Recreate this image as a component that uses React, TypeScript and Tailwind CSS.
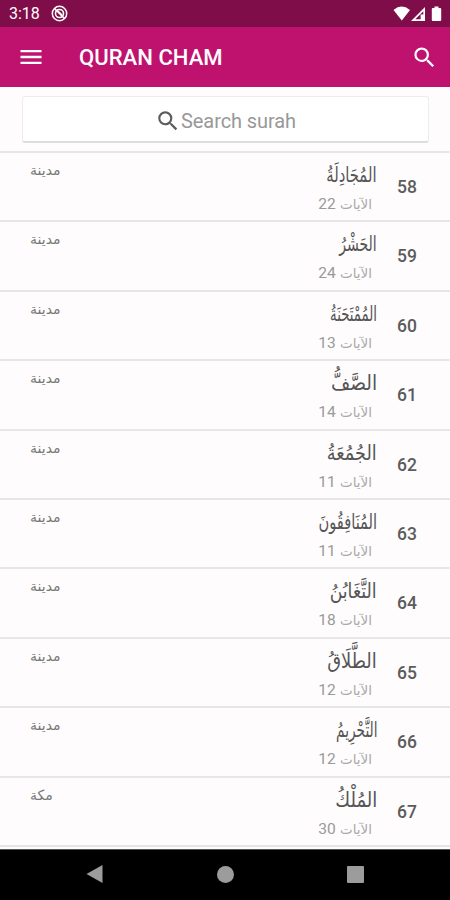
import { MdMenu, MdSearch } from "react-icons/md";

const surahs = [
  { id: 58, name: "المُجَادِلَةُ", verses: 22, place: "مدينة", fit: "scale-x-[0.78]" },
  { id: 59, name: "الحَشْرُ", verses: 24, place: "مدينة", fit: "scale-x-[0.74]" },
  { id: 60, name: "المُمْتَحَنَةُ", verses: 13, place: "مدينة", fit: "scale-x-[0.7]" },
  { id: 61, name: "الصَّفُّ", verses: 14, place: "مدينة", fit: "scale-x-[0.98]" },
  { id: 62, name: "الجُمُعَةُ", verses: 11, place: "مدينة", fit: "scale-x-[0.93]" },
  { id: 63, name: "المُنَافِقُونَ", verses: 11, place: "مدينة", fit: "scale-x-[0.77]" },
  { id: 64, name: "التَّغَابُنُ", verses: 18, place: "مدينة", fit: "scale-x-[0.91]" },
  { id: 65, name: "الطَّلَاقُ", verses: 12, place: "مدينة", fit: "scale-x-[0.94]" },
  { id: 66, name: "التَّحْرِيمُ", verses: 12, place: "مدينة", fit: "scale-x-[0.72]" },
  { id: 67, name: "المُلْكُ", verses: 30, place: "مكة", fit: "scale-x-[0.95]" },
];

const StatusBar = () => (
  <div className="flex h-[27px] shrink-0 items-center bg-[#7f0d49] pl-[9px] pr-[7px] text-white">
    <span className="w-[42px] pt-px text-[16px] leading-none">3:18</span>
    <svg width="17" height="17" viewBox="0 0 17 17" fill="none" stroke="currentColor">
      <circle cx="8.5" cy="8.5" r="7.2" strokeWidth="1.5" />
      <circle cx="8.5" cy="8.5" r="4" strokeWidth="1.6" />
      <path d="M3.5 3.5l10 10" strokeWidth="1.7" />
      <path d="M7 6l4 4" strokeWidth="1.5" />
    </svg>
    <div className="flex-1" />
    <svg width="50" height="16" viewBox="0 0 50 16" fill="currentColor">
      <path d="M0.5 4Q8.5-2.8 17 4L8.8 14.5Z" />
      <path d="M32 1v14H18ZM30.3 5.3L22.3 13.2h5.3V8.5h2.7Z" fillRule="evenodd" />
      <rect x="28.6" y="9.5" width="2.2" height="3.7" fillOpacity="0.35" />
      <path d="M41.5 0.5h4V2h1.7q1 0 1 1v11q0 1-1 1h-7.4q-1 0-1-1V3q0-1 1-1h1.7Z" />
    </svg>
  </div>
);

const Header = () => (
  <header className="flex h-[60px] shrink-0 items-center bg-[#bf126e] pl-[17px] pr-[12px] text-white">
    <MdMenu size={28} />
    <h1 className="ml-[34px] flex-1 pt-px text-[22.1px] font-medium leading-none">QURAN CHAM</h1>
    <MdSearch size={27} />
  </header>
);

const App = () => {
  return (
    <div className="flex h-[900px] w-[450px] flex-col overflow-hidden bg-[#fefcfd] font-['Roboto','DejaVu_Sans',sans-serif]">
      <StatusBar />
      <Header />

      {/* Search */}
      <div className="h-[64px] shrink-0 pl-[22px] pr-[21px] pt-[9px]">
        <div className="flex h-[47px] items-center justify-center rounded-[3px] border border-b-2 border-[#eeecee] border-b-[#dedddd] bg-white pt-[3px] text-[#989898]">
          <MdSearch size={26} className="text-[#5c5c5c]" />
          <span className="text-[20px] tracking-[-0.1px]">Search surah</span>
        </div>
      </div>

      {/* Surah list */}
      <main className="h-[698px] shrink-0 overflow-hidden">
        {surahs.map((s) => (
          <div key={s.id} className="flex h-[69.4px] border-t-2 border-[#e8e7e8]">
            <div dir="rtl" className="ml-[30px] mt-[7px] h-[20px] w-[60px] text-left font-['DejaVu_Sans'] text-[14px] leading-[20px] text-[#777]">{s.place}</div>
            <div className="flex-1" />
            <div dir="rtl" className="mr-[20px] flex w-[80px] flex-col items-start">
              <div className={`mt-[3px] h-[36px] origin-right scale-y-110 whitespace-nowrap font-['DejaVu_Sans'] text-[19px] leading-[36px] text-[#555] ${s.fit}`}>{s.name}</div>
              <div className="mr-[5px] h-[23px] whitespace-nowrap font-['DejaVu_Sans'] text-[13.5px] leading-[24px] text-[#aaa]">
                الآيات <span className="font-['Roboto'] text-[15.5px] text-[#999]">{s.verses}</span>
              </div>
            </div>
            <div className="w-[53px] pt-[22px] text-[17.5px] font-medium leading-[24px] text-[#5c5c5c]">{s.id}</div>
          </div>
        ))}
        <div className="h-[2px] bg-[#e6e5e6]" />
      </main>

      {/* Navigation bar */}
      <nav className="flex h-[51px] shrink-0 items-center justify-between border-t border-[#555] bg-black pl-[86px] pr-[86px] pb-[2px]">
        <svg width="17" height="20" viewBox="0 0 17 20" fill="#9c9c9c">
          <path d="M0.5 10L16.5 1v18Z" />
        </svg>
        <div className="size-[17px] rounded-full bg-[#9c9c9c]" />
        <div className="size-[17px] rounded-[1px] bg-[#9c9c9c]" />
      </nav>
    </div>
  );
};

export default App;
